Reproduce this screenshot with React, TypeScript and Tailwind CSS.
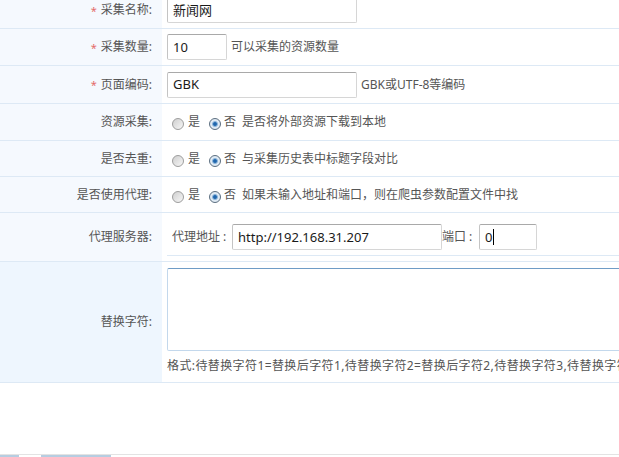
import React from "react";

const FONT = "font-['Noto_Sans','Noto_Sans_CJK_SC',sans-serif]";

function Radio({ checked }: { checked?: boolean }) {
  if (checked) {
    return (
      <span className="mt-[4px] inline-flex h-[12px] w-[12px] shrink-0 items-center justify-center rounded-full border border-[#5d6f80] bg-[#dfeaf4]">
        <span className="h-[6px] w-[6px] rounded-full border border-[#8fb8dc] bg-[#1f66ad]" />
      </span>
    );
  }
  return (
    <span className="mt-[4px] inline-block h-[12px] w-[12px] shrink-0 rounded-full border border-[#9d9d9d] bg-gradient-to-br from-[#cfcfcf] to-[#f7f7f7]" />
  );
}

function Box({
  w,
  children,
}: {
  w: string;
  children?: React.ReactNode;
}) {
  return (
    <div
      className={`${w} flex h-[26px] shrink-0 items-center rounded-[2px] border border-[#d6d6d6] border-t-[#a9a9a9] border-l-[#c4c4c4] bg-white pl-[5px] text-[13px] leading-none text-[#1a1a1a]`}
    >
      {children}
    </div>
  );
}

function Label({
  children,
  req,
  bg = "bg-[#f5f9fe]",
}: {
  children: React.ReactNode;
  req?: boolean;
  bg?: string;
}) {
  return (
    <div
      className={`flex w-[162px] shrink-0 items-center justify-end ${bg} pr-[10px] text-[12px] leading-none text-[#555]`}
    >
      {req && <span className="mr-[4px] text-[11px] text-[#e46b6b]">*</span>}
      {children}
    </div>
  );
}

function RadioRow({ label, desc, h }: { label: string; desc: string; h: string }) {
  return (
    <div className={`flex ${h} border-b border-[#dde9f5]`}>
      <Label>{label}</Label>
      <div className="flex flex-1 items-center pl-[10px] text-[12px] leading-none text-[#555]">
        <Radio />
        <span className="ml-[4px]">是</span>
        <span className="ml-[9px] flex items-center">
          <Radio checked />
        </span>
        <span className="ml-[3px]">否</span>
        <span className="ml-[6px] whitespace-nowrap">{desc}</span>
      </div>
    </div>
  );
}

export default function App() {
  return (
    <div className={`flex h-[457px] w-[619px] flex-col overflow-hidden bg-white ${FONT}`}>
      <div className="-mt-[8px] flex flex-col">
        <div className="flex h-[37px] border-b border-[#dde9f5]">
          <Label req>采集名称:</Label>
          <div className="flex flex-1 items-center pl-[5px]">
            <Box w="w-[190px]">新闻网</Box>
          </div>
        </div>
        <div className="flex h-[37px] border-b border-[#dde9f5]">
          <Label req>采集数量:</Label>
          <div className="flex flex-1 items-center pl-[5px]">
            <Box w="w-[60px]">10</Box>
            <span className="ml-[4px] text-[12px] leading-none text-[#555]">可以采集的资源数量</span>
          </div>
        </div>
        <div className="flex h-[38px] border-b border-[#dde9f5]">
          <Label req>页面编码:</Label>
          <div className="flex flex-1 items-center pl-[5px]">
            <Box w="w-[190px]">GBK</Box>
            <span className="ml-[4px] text-[12px] leading-none text-[#555]">GBK或UTF-8等编码</span>
          </div>
        </div>
        <RadioRow h="h-[37px]" label="资源采集:" desc="是否将外部资源下载到本地" />
        <RadioRow h="h-[36px]" label="是否去重:" desc="与采集历史表中标题字段对比" />
        <RadioRow h="h-[36px]" label="是否使用代理:" desc="如果未输入地址和端口，则在爬虫参数配置文件中找" />
        <div className="flex h-[49px] border-b border-[#dde9f5]">
          <Label>代理服务器:</Label>
          <div className="flex-1 pl-[5px]">
            <div className="flex h-[43px] items-start border-b border-[#dde9f5] pt-[11px] text-[12px] leading-none text-[#555]">
              <span className="mt-[7px] w-[65px] shrink-0 whitespace-nowrap pl-[5px]">代理地址 :</span>
              <Box w="w-[210px]">http://192.168.31.207</Box>
              <span className="mt-[7px] w-[37px] shrink-0 whitespace-nowrap">端口 :</span>
              <Box w="w-[58px]">
                0<span className="ml-[1px] inline-block h-[16px] w-[1px] bg-black" />
              </Box>
            </div>
          </div>
        </div>
        <div className="flex h-[121px] border-b border-[#dde9f5]">
          <Label bg="bg-[#eef6fe]">替换字符:</Label>
          <div className="flex flex-1 flex-col overflow-hidden pl-[5px] pt-[6px]">
            <div className="h-[83px] w-[480px] shrink-0 rounded-[2px] border border-[#c3d8ec] border-t-[#6f9cc6] bg-white" />
            <div className="mt-[9px] whitespace-nowrap text-[12px] leading-none tracking-[0.4px] text-[#555]">
              格式:待替换字符1=替换后字符1,待替换字符2=替换后字符2,待替换字符3,待替换字符
            </div>
          </div>
        </div>
      </div>
      <div className="flex-1" />
      <div className="flex h-[3px] flex-col border-t border-[#e3e3e3]">
        <div className="flex h-[2px]">
          <div className="w-[19px] bg-[#b6cde1]" />
          <div className="w-[22px]" />
          <div className="w-[70px] bg-[#b6cde1]" />
        </div>
      </div>
    </div>
  );
}
